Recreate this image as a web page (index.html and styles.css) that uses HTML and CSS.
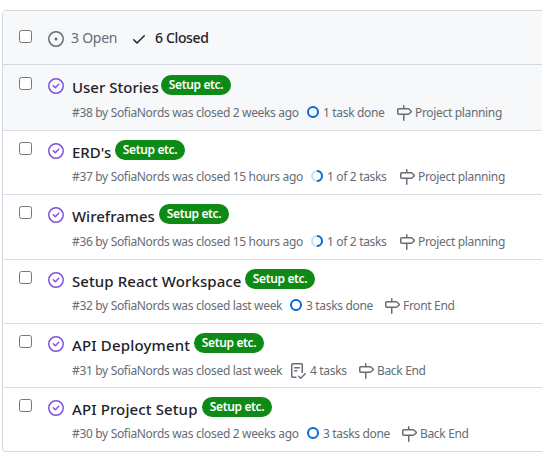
FILE: index.html
```
<!DOCTYPE html>
<html lang="en">
<head>
<meta charset="utf-8">
<title>Issues</title>
<link rel="stylesheet" href="styles.css">
</head>
<body>
<svg class="sprite" aria-hidden="true">
<symbol id="open" viewBox="0 0 16 16"><path d="M8 9.5a1.5 1.5 0 1 0 0-3 1.5 1.5 0 0 0 0 3Z"/><path d="M8 0a8 8 0 1 1 0 16A8 8 0 0 1 8 0ZM1.5 8a6.5 6.5 0 1 0 13 0 6.5 6.5 0 0 0-13 0Z"/></symbol>
<symbol id="check" viewBox="0 0 16 16"><path d="M13.78 4.22a.75.75 0 0 1 0 1.06l-7.25 7.25a.75.75 0 0 1-1.06 0L2.22 9.28a.75.75 0 0 1 1.06-1.06L6 10.94l6.72-6.72a.75.75 0 0 1 1.06 0Z"/></symbol>
<symbol id="closed" viewBox="0 0 16 16"><path d="M11.28 6.78a.75.75 0 0 0-1.06-1.06L7.25 8.69 5.78 7.22a.75.75 0 0 0-1.06 1.06l2 2a.75.75 0 0 0 1.06 0l3.5-3.5Z"/><path d="M16 8A8 8 0 1 1 0 8a8 8 0 0 1 16 0Zm-1.5 0a6.5 6.5 0 1 0-13 0 6.5 6.5 0 0 0 13 0Z"/></symbol>
<symbol id="milestone" viewBox="0 0 16 16"><path d="M7.75 0a.75.75 0 0 1 .75.75V3h3.634c.414 0 .814.147 1.13.414l2.07 1.75a1.75 1.75 0 0 1 0 2.672l-2.07 1.75a1.75 1.75 0 0 1-1.13.414H8.5v5.25a.75.75 0 0 1-1.5 0V10H2.75A1.75 1.75 0 0 1 1 8.25v-3.5C1 3.784 1.784 3 2.75 3H7V.75A.75.75 0 0 1 7.75 0Zm4.384 8.5a.25.25 0 0 0 .161-.06l2.07-1.75a.248.248 0 0 0 0-.38l-2.07-1.75a.25.25 0 0 0-.161-.06H2.75a.25.25 0 0 0-.25.25v3.5c0 .138.112.25.25.25h9.384Z"/></symbol>
<symbol id="tasklist" viewBox="0 0 16 16"><path d="M2.5 1.75a.25.25 0 0 1 .25-.25h8.5a.25.25 0 0 1 .25.25v7.736a.75.75 0 1 0 1.5 0V1.75A1.75 1.75 0 0 0 11.25 0h-8.5A1.75 1.75 0 0 0 1 1.75v11.5c0 .966.784 1.75 1.75 1.75h3.17a.75.75 0 0 0 0-1.5H2.75a.25.25 0 0 1-.25-.25V1.75ZM4.75 4a.75.75 0 0 0 0 1.5h4.5a.75.75 0 0 0 0-1.5h-4.5ZM4 7.75A.75.75 0 0 1 4.75 7h2a.75.75 0 0 1 0 1.5h-2A.75.75 0 0 1 4 7.75Zm11.774 3.537a.75.75 0 0 0-1.048-1.074L10.7 14.145 9.281 12.72a.75.75 0 0 0-1.062 1.058l1.943 1.95a.75.75 0 0 0 1.055.008l4.557-4.45Z"/></symbol>
<symbol id="done" viewBox="0 0 12 12"><circle class="ring" cx="6" cy="6" r="5"/></symbol>
<symbol id="half" viewBox="0 0 12 12"><circle class="ring pale" cx="6" cy="6" r="5"/><path class="ring" d="M6 1a5 5 0 0 1 0 10"/></symbol>
</svg>
<main class="list">
<header class="head"><input type="checkbox"><svg class="icon"><use href="#open"/></svg><span class="open">3 Open</span><svg class="icon tick"><use href="#check"/></svg><span class="shut">6 Closed</span></header>
<article class="row first"><input type="checkbox"><svg class="icon state"><use href="#closed"/></svg><div class="body"><div class="line"><h2 class="t1">User Stories</h2><b>Setup etc.</b></div><div class="meta"><span class="weeks">#38 by SofiaNords was closed 2 weeks ago</span><svg class="prog"><use href="#done"/></svg><span class="task one">1 task done</span><svg class="icon"><use href="#milestone"/></svg><span class="name">Project planning</span></div></div></article>
<article class="row"><input type="checkbox"><svg class="icon state"><use href="#closed"/></svg><div class="body"><div class="line"><h2 class="t2">ERD's</h2><b>Setup etc.</b></div><div class="meta"><span class="hours">#37 by SofiaNords was closed 15 hours ago</span><svg class="prog"><use href="#half"/></svg><span class="task part">1 of 2 tasks</span><svg class="icon"><use href="#milestone"/></svg><span class="name">Project planning</span></div></div></article>
<article class="row tall"><input type="checkbox"><svg class="icon state"><use href="#closed"/></svg><div class="body"><div class="line"><h2 class="t3">Wireframes</h2><b>Setup etc.</b></div><div class="meta"><span class="hours">#36 by SofiaNords was closed 15 hours ago</span><svg class="prog"><use href="#half"/></svg><span class="task part">1 of 2 tasks</span><svg class="icon"><use href="#milestone"/></svg><span class="name">Project planning</span></div></div></article>
<article class="row"><input type="checkbox"><svg class="icon state"><use href="#closed"/></svg><div class="body"><div class="line"><h2 class="t4">Setup React Workspace</h2><b>Setup etc.</b></div><div class="meta"><span class="last">#32 by SofiaNords was closed last week</span><svg class="prog"><use href="#done"/></svg><span class="task three">3 tasks done</span><svg class="icon"><use href="#milestone"/></svg><span class="name">Front End</span></div></div></article>
<article class="row low"><input type="checkbox"><svg class="icon state"><use href="#closed"/></svg><div class="body"><div class="line"><h2 class="t5">API Deployment</h2><b>Setup etc.</b></div><div class="meta"><span class="last">#31 by SofiaNords was closed last week</span><svg class="icon"><use href="#tasklist"/></svg><span class="task four">4 tasks</span><svg class="icon"><use href="#milestone"/></svg><span class="name">Back End</span></div></div></article>
<article class="row final"><input type="checkbox"><svg class="icon state"><use href="#closed"/></svg><div class="body"><div class="line"><h2 class="t6">API Project Setup</h2><b>Setup etc.</b></div><div class="meta"><span class="weeks">#30 by SofiaNords was closed 2 weeks ago</span><svg class="prog"><use href="#done"/></svg><span class="task three">3 tasks done</span><svg class="icon"><use href="#milestone"/></svg><span class="name">Back End</span></div></div></article>
</main>
</body>
</html>
```
FILE: styles.css
```
* { box-sizing: border-box; }
body { margin: 0; padding: 10px 0 0 2px; height: 461px; overflow: hidden; background: #fff; color: #1f2328; font-family: "Segoe UI", "Noto Sans", sans-serif; }
.sprite { position: absolute; width: 0; height: 0; }
.list { width: 560px; border: 1px solid #d0d7de; border-radius: 4px 0 0 4px; overflow: hidden; }
input { flex: none; width: 13px; height: 13px; margin: 0; appearance: none; background: #fff; border: 1px solid #767676; border-radius: 2.5px; }
.icon { flex: none; width: 16px; height: 16px; fill: currentColor; }
.ring { fill: none; stroke: #0969da; stroke-width: 2; }
.pale { stroke: #b6e3ff; }
.head { display: flex; height: 54px; padding: 0 16px; align-items: center; background: #f6f8fa; border-bottom: 1px solid #d0d7de; color: #656d76; font-size: 14px; white-space: nowrap; }
.head input { margin: -3px 16px 0 0; }
.head .icon { margin-top: 2px; }
.open { width: 60px; margin-left: 7px; letter-spacing: -.25px; }
.tick { color: #1f2328; }
.shut { margin-left: 8px; color: #1f2328; font-weight: 500; letter-spacing: -.35px; }
.row { display: flex; height: 64px; padding: 9px 16px 0; border-bottom: 1px solid #d8dee4; }
.row.first { height: 66px; padding-top: 10px; background: #f6f8fa; }
.row.first, .row.first .line { padding-top: 10px; }
.row.first .line { padding-top: 0; }
.row.tall { height: 65px; }
.row.final { height: 63px; border-bottom: 0; }
.row input { margin: 2px 16px 0 0; }
.state { margin-top: 3px; color: #8250df; }
.body { margin-left: 8px; }
.line { display: flex; height: 20px; white-space: nowrap; }
h2 { margin: 1px 0 0; font-size: 15px; line-height: 22px; font-weight: 500; }
.t1 { width: 89px; }
.t2 { width: 43px; }
.t3 { width: 87px; }
.t4 { width: 173px; letter-spacing: .08px; }
.t5 { width: 122px; letter-spacing: .17px; }
.t6 { width: 130px; letter-spacing: .12px; }
b { width: 70px; height: 20px; border-radius: 10px; background: #0e8a16; color: #fff; text-align: center; font-size: 12px; line-height: 20px; font-weight: 600; letter-spacing: -.35px; }
.meta { display: flex; height: 16px; margin-top: 9px; align-items: center; color: #656d76; font-size: 12px; line-height: 16px; letter-spacing: -.33px; white-space: nowrap; }
.first .meta, .tall .meta, .low .meta { margin-top: 10px; }
.weeks { width: 235px; }
.hours { width: 239px; }
.last { width: 218px; }
.prog { flex: none; width: 12px; height: 12px; margin-top: -2px; }
.task { margin-left: 4px; }
.one { width: 73px; }
.part { width: 72px; }
.three { width: 78px; }
.four { width: 48px; }
.name { margin-left: 3px; }
```
